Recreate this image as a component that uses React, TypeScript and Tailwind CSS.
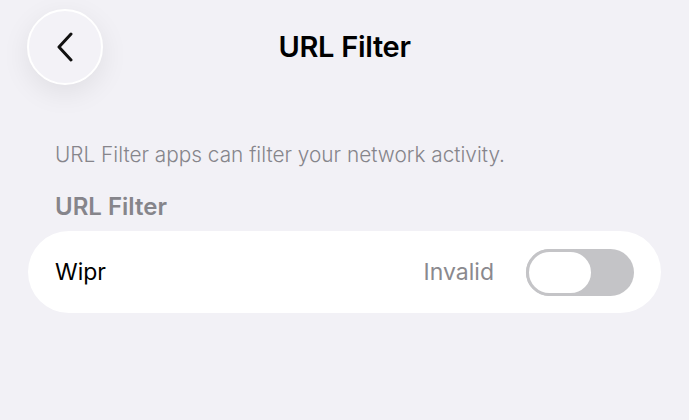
export default function App() {
  return (
    <div
      className="h-[420px] w-[689px] overflow-hidden bg-[#f2f1f6]"
      style={{ fontFamily: "Inter, 'Noto Sans', sans-serif" }}
    >
      <div className="relative flex h-[94px] items-center justify-center">
        <button className="absolute left-[27px] top-[9px] flex h-[76px] w-[76px] items-center justify-center rounded-full border-2 border-white bg-[#f3f2f7] shadow-[0_8px_28px_rgba(0,0,0,0.08)]">
          <svg width="18" height="30" viewBox="0 0 18 30" fill="none">
            <path
              d="M15 2 L3 15 L15 28"
              stroke="#111"
              strokeWidth="3"
              strokeLinecap="round"
              strokeLinejoin="round"
            />
          </svg>
        </button>
        <h1 className="text-[29px] font-semibold tracking-[-0.3px] text-black">
          URL Filter
        </h1>
      </div>

      <div className="px-[28px] pt-[47px]">
        <p className="px-[27px] text-[20.8px] font-light leading-[28px] text-[#86858b]">
          URL Filter apps can filter your network activity.
        </p>
        <h2 className="mt-[24px] px-[27px] text-[24px] font-semibold leading-[28px] text-[#86858b]">
          URL Filter
        </h2>
        <div className="mt-[10px] flex h-[82px] items-center rounded-[41px] bg-white pl-[27px] pr-[27px]">
          <span className="flex-1 text-[23px] text-black">Wipr</span>
          <span className="mr-[32px] text-[23px] text-[#8a898e]">Invalid</span>
          <div className="flex h-[47px] w-[108px] items-center rounded-full bg-[#c4c4c7]">
            <div className="h-[47px] w-[68px] rounded-full border-[3px] border-[#c4c4c7] bg-white" />
          </div>
        </div>
      </div>
    </div>
  );
}
